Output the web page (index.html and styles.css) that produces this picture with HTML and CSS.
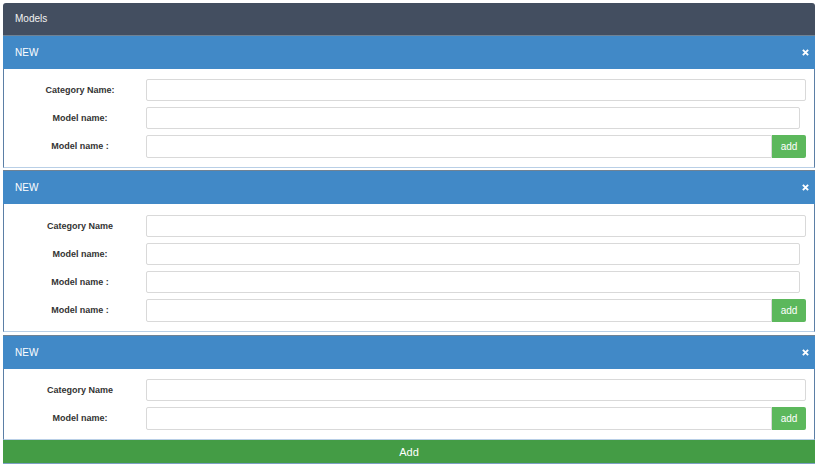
FILE: index.html
```html
<!DOCTYPE html>
<html>
<head>
<meta charset="utf-8">
<link rel="stylesheet" href="styles.css">
</head>
<body>
<div class="wrap">
  <div class="top">Models</div>

  <div class="panel first">
    <div class="phead"><span>NEW</span><svg class="x" viewBox="0 0 8 8"><path d="M1 1L7 7M7 1L1 7" stroke="#fff" stroke-width="2.2"/></svg></div>
    <div class="pbody">
      <div class="row"><label>Category Name:</label><input class="inp wide"></div>
      <div class="row"><label>Model name:</label><input class="inp mid"></div>
      <div class="row"><label>Model name :</label><div class="grp"><input class="inp grow"><button class="addbtn">add</button></div></div>
    </div>
  </div>

  <div class="panel second">
    <div class="phead"><span>NEW</span><svg class="x" viewBox="0 0 8 8"><path d="M1 1L7 7M7 1L1 7" stroke="#fff" stroke-width="2.2"/></svg></div>
    <div class="pbody">
      <div class="row"><label>Category Name</label><input class="inp wide"></div>
      <div class="row"><label>Model name:</label><input class="inp mid"></div>
      <div class="row"><label>Model name :</label><input class="inp mid"></div>
      <div class="row"><label>Model name :</label><div class="grp"><input class="inp grow"><button class="addbtn">add</button></div></div>
    </div>
  </div>

  <div class="panel last">
    <div class="phead"><span>NEW</span><svg class="x" viewBox="0 0 8 8"><path d="M1 1L7 7M7 1L1 7" stroke="#fff" stroke-width="2.2"/></svg></div>
    <div class="pbody">
      <div class="row"><label>Category Name</label><input class="inp wide"></div>
      <div class="row"><label>Model name:</label><div class="grp"><input class="inp grow"><button class="addbtn">add</button></div></div>
    </div>
    <button class="bigadd">Add</button>
  </div>
</div>
</body>
</html>
```

FILE: styles.css
```css
html, body {
  margin: 0;
  padding: 0;
  background: #fff;
}
body {
  font-family: "Liberation Sans", Arial, sans-serif;
}
.wrap {
  margin: 3px 0 0 3px;
  width: 812px;
}
.top {
  height: 32px;
  background: #434e60;
  color: #f2f2f2;
  font-size: 10px;
  line-height: 32px;
  padding-left: 12px;
  border-radius: 3px 3px 0 0;
  box-sizing: border-box;
}
.panel {
  border-top: 1px solid #6f8294;
  margin-bottom: 3px;
}
.panel.first {
  margin-bottom: 2px;
}
.phead {
  height: 33px;
  background: #4189c7;
  color: #fff;
  font-size: 10px;
  display: flex;
  align-items: center;
  justify-content: space-between;
  padding: 0 6px 0 12px;
}
.x {
  width: 7px;
  height: 7px;
}
.pbody {
  border-left: 1px solid #5b7fa6;
  border-right: 1px solid #5b7fa6;
  border-bottom: 1px solid #b9cfe6;
  padding: 10px 8px 10px 10px;
  display: flex;
  flex-direction: column;
  gap: 6px;
}
.panel.second .pbody {
  padding-top: 11px;
}
.row {
  display: flex;
  align-items: center;
  height: 22px;
}
label {
  width: 132px;
  flex: none;
  text-align: center;
  font-size: 9px;
  font-weight: bold;
  color: #333;
}
.inp {
  height: 22px;
  box-sizing: border-box;
  border: 1px solid #d9d9d9;
  border-radius: 2px;
  background: #fff;
  margin: 0;
  padding: 0 6px;
  outline: none;
}
.wide {
  width: 660px;
}
.mid {
  width: 654px;
}
.grp {
  display: flex;
  width: 660px;
  height: 23px;
}
.grow {
  flex: 1;
  height: 23px;
  border-radius: 2px 0 0 2px;
}
.addbtn {
  width: 34px;
  height: 23px;
  border: none;
  background: #5cb85c;
  color: #fff;
  font-family: "Liberation Sans", Arial, sans-serif;
  font-size: 10px;
  padding: 0;
  border-radius: 0 2px 2px 0;
}
.bigadd {
  display: block;
  width: 812px;
  height: 24px;
  margin: 0;
  border: none;
  border-bottom: 1px solid #7da0c4;
  background: #449c45;
  color: #fff;
  font-family: "Liberation Sans", Arial, sans-serif;
  font-size: 11px;
  padding: 0;
}
```
